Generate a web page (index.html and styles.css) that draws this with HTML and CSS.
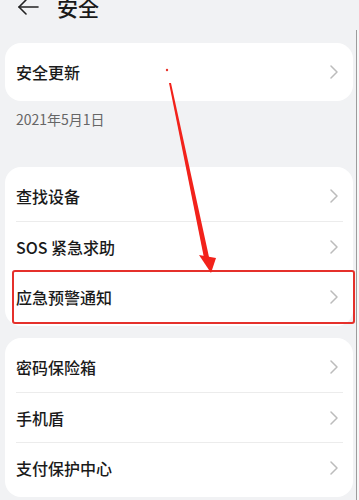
FILE: index.html
```html
<!DOCTYPE html>
<html lang="zh-CN">
<head>
<meta charset="utf-8">
<title>安全</title>
<link rel="stylesheet" href="styles.css">
</head>
<body>
<div class="page">
  <div class="main">
    <header class="header">
      <svg class="back" width="22" height="16" viewBox="0 0 22 16">
        <polyline points="9,1 2,8 9,15" fill="none" stroke="#222" stroke-width="1.6" stroke-linejoin="round" stroke-linecap="round"/>
        <line x1="2" y1="8" x2="21" y2="8" stroke="#222" stroke-width="1.6" stroke-linecap="round"/>
      </svg>
      <h1 class="title">安全</h1>
    </header>

    <section class="card card-first">
      <div class="row"><span class="label">安全更新</span><svg class="chev" width="8" height="14" viewBox="0 0 8 14"><polyline points="1,1 7,7 1,13" fill="none" stroke="#bcbcbc" stroke-width="1.5" stroke-linecap="round" stroke-linejoin="round"/></svg></div>
    </section>
    <p class="date">2021年5月1日</p>

    <section class="card card-second">
      <div class="row"><span class="label">查找设备</span><svg class="chev" width="8" height="14" viewBox="0 0 8 14"><polyline points="1,1 7,7 1,13" fill="none" stroke="#bcbcbc" stroke-width="1.5" stroke-linecap="round" stroke-linejoin="round"/></svg></div>
      <div class="divider"></div>
      <div class="row"><span class="label">SOS 紧急求助</span><svg class="chev" width="8" height="14" viewBox="0 0 8 14"><polyline points="1,1 7,7 1,13" fill="none" stroke="#bcbcbc" stroke-width="1.5" stroke-linecap="round" stroke-linejoin="round"/></svg></div>
      <div class="divider"></div>
      <div class="row"><span class="label">应急预警通知</span><svg class="chev" width="8" height="14" viewBox="0 0 8 14"><polyline points="1,1 7,7 1,13" fill="none" stroke="#bcbcbc" stroke-width="1.5" stroke-linecap="round" stroke-linejoin="round"/></svg></div>
    </section>

    <section class="card card-third">
      <div class="row"><span class="label">密码保险箱</span><svg class="chev" width="8" height="14" viewBox="0 0 8 14"><polyline points="1,1 7,7 1,13" fill="none" stroke="#bcbcbc" stroke-width="1.5" stroke-linecap="round" stroke-linejoin="round"/></svg></div>
      <div class="divider"></div>
      <div class="row"><span class="label">手机盾</span><svg class="chev" width="8" height="14" viewBox="0 0 8 14"><polyline points="1,1 7,7 1,13" fill="none" stroke="#bcbcbc" stroke-width="1.5" stroke-linecap="round" stroke-linejoin="round"/></svg></div>
      <div class="divider"></div>
      <div class="row"><span class="label">支付保护中心</span><svg class="chev" width="8" height="14" viewBox="0 0 8 14"><polyline points="1,1 7,7 1,13" fill="none" stroke="#bcbcbc" stroke-width="1.5" stroke-linecap="round" stroke-linejoin="round"/></svg></div>
    </section>
  </div>
  <div class="rail"><div class="rail-line"></div></div>

  <svg class="annot" width="359" height="500" viewBox="0 0 359 500">
    <rect x="13" y="271" width="341" height="52" rx="2" fill="none" stroke="#e5302b" stroke-width="2"/>
    <circle cx="167" cy="70" r="1.2" fill="#e8342c"/>
    <polygon points="169,83 171,83 209,257 204,258" fill="#f2221b"/>
    <polygon points="199,255 216,258 211,273" fill="#f2221b"/>
  </svg>
</div>
</body>
</html>
```

FILE: styles.css
```css
* { box-sizing: border-box; }
html, body { margin: 0; padding: 0; }
body {
  background: #ffffff;
  font-family: "Noto Sans CJK SC", "Noto Sans", sans-serif;
  color: #1a1a1a;
}
.page {
  position: relative;
  display: flex;
  width: 359px;
  min-height: 500px;
  overflow: hidden;
}
.main {
  flex: 0 0 356px;
  background: #f1f2f4;
  padding-bottom: 10px;
}
.rail {
  flex: 0 0 3px;
  display: flex;
  padding-top: 30px;
  background: #f1f2f4;
}
.rail-line {
  width: 1px;
  background: #9c9c9c;
}
.rail::after {
  content: "";
  flex: 1;
  background: #f7f7f7;
}
.header {
  display: flex;
  align-items: center;
  height: 14px;
  padding-left: 17px;
}
.back { flex: 0 0 auto; }
.title {
  margin: 0 0 0 18px;
  font-size: 21px;
  font-weight: 500;
  line-height: 21px;
  color: #1a1a1a;
}
.card {
  background: #ffffff;
  border-radius: 16px;
  margin: 0 3px 0 5px;
  padding: 4px 0;
}
.card-first { margin-top: 29px; }
.card-second { margin-top: 30px; }
.card-third { margin-top: 12px; }
.row {
  display: flex;
  align-items: center;
  justify-content: space-between;
  height: 50px;
  padding: 0 15px 0 11px;
}
.label {
  font-size: 16px;
  line-height: 20px;
  font-weight: 500;
  color: #1a1a1a;
}
.chev { flex: 0 0 auto; }
.divider {
  height: 1px;
  margin: -0.5px 10px 0 11px;
  background: #ececec;
}
.date {
  margin: 0;
  padding: 8px 11px;
  font-size: 14px;
  line-height: 20px;
  color: #666666;
  padding-left: 16px;
}
.annot {
  position: absolute;
  left: 0;
  top: 0;
  pointer-events: none;
}
```
